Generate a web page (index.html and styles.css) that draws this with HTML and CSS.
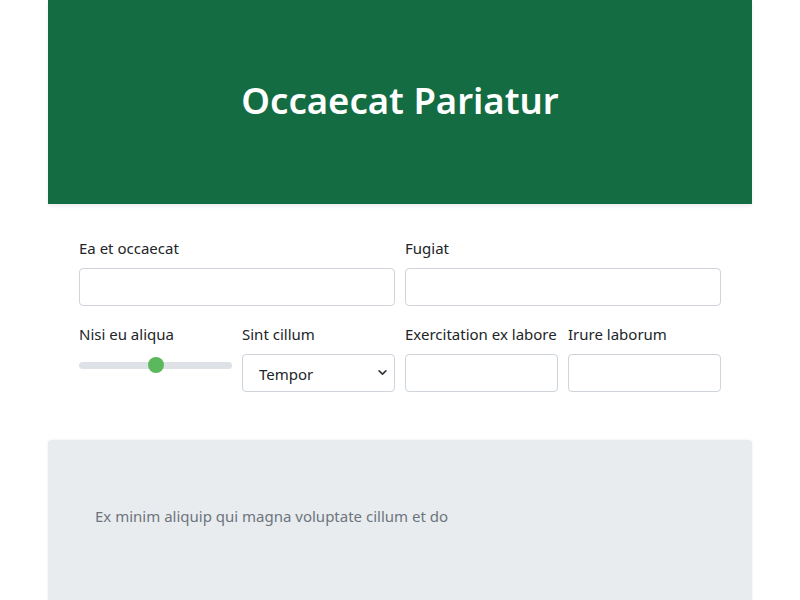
FILE: index.html
```html
<!DOCTYPE html>
<html lang="en">
<head>
<meta charset="utf-8">
<title>Occaecat Pariatur</title>
<link rel="stylesheet" href="styles.css">
</head>
<body>
<div class="container">
  <header class="hero">
    <h1 class="hero-title">Occaecat Pariatur</h1>
  </header>
  <form class="form">
    <div class="row row-2">
      <div class="field">
        <label class="label" for="f1">Ea et occaecat</label>
        <input class="control" id="f1" type="text">
      </div>
      <div class="field">
        <label class="label" for="f2">Fugiat</label>
        <input class="control" id="f2" type="text">
      </div>
    </div>
    <div class="row row-4">
      <div class="field">
        <label class="label" for="f3">Nisi eu aliqua</label>
        <input class="range" id="f3" type="range" min="0" max="100" value="50">
      </div>
      <div class="field">
        <label class="label" for="f4">Sint cillum</label>
        <div class="select-wrap">
          <select class="control select" id="f4">
            <option>Tempor</option>
          </select>
          <svg class="chevron" width="9" height="9" viewBox="0 0 16 16" aria-hidden="true"><path d="M2 5l6 6 6-6" fill="none" stroke="#343a40" stroke-width="3" stroke-linecap="round" stroke-linejoin="round"/></svg>
        </div>
      </div>
      <div class="field">
        <label class="label" for="f5">Exercitation ex labore</label>
        <input class="control" id="f5" type="text">
      </div>
      <div class="field">
        <label class="label" for="f6">Irure laborum</label>
        <input class="control" id="f6" type="text">
      </div>
    </div>
  </form>
  <section class="panel">
    <p class="panel-text">Ex minim aliquip qui magna voluptate cillum et do</p>
  </section>
</div>
</body>
</html>
```
FILE: styles.css
```css
* { box-sizing: border-box; }
html, body { margin: 0; padding: 0; background: #fff; }
body {
  font-family: "Noto Sans", "Open Sans", sans-serif;
  font-size: 15px;
  line-height: 24px;
  color: #212529;
}
.container {
  width: 704px;
  margin: 0 auto;
}
.hero {
  background: #146c43;
  height: 204px;
  display: flex;
  justify-content: center;
  padding-top: 74px;
  box-shadow: 0 2px 4px rgba(0,0,0,0.08);
}
.hero-title {
  margin: 0;
  color: #fff;
  font-size: 36.5px;
  font-weight: 600;
  line-height: 52px;
  height: 52px;
}
.form {
  padding: 32px 31px 48px;
  display: flex;
  flex-direction: column;
  gap: 16px;
}
.row {
  display: grid;
  gap: 10px;
}
.row-2 { grid-template-columns: 1fr 1fr; }
.row-4 { grid-template-columns: repeat(4, 1fr); }
.field {
  display: flex;
  flex-direction: column;
  min-width: 0;
}
.label {
  display: block;
  margin-bottom: 8px;
  white-space: nowrap;
}
.control {
  display: block;
  width: 100%;
  height: 38px;
  border: 1px solid #ced4da;
  border-radius: 4px;
  background: #fff;
  font: inherit;
  color: #212529;
  padding: 6px 12px;
}
.select-wrap {
  position: relative;
}
.select {
  -webkit-appearance: none;
  appearance: none;
  padding: 7px 30px 7px 16px;
}
.chevron {
  position: absolute;
  right: 8px;
  top: 14px;
  pointer-events: none;
}
.range {
  -webkit-appearance: none;
  appearance: none;
  width: 100%;
  height: 16px;
  margin: 3px 0 0;
  background: transparent;
}
.range::-webkit-slider-runnable-track {
  height: 7px;
  border-radius: 4px;
  background: #dee2e6;
}
.range::-webkit-slider-thumb {
  -webkit-appearance: none;
  width: 16px;
  height: 16px;
  border-radius: 50%;
  background: #5cb85c;
  border: 0;
  margin-top: -4.5px;
}
.panel {
  background: #e9ecef;
  border-radius: 4px;
  min-height: 220px;
  padding: 64px 47px 48px;
  box-shadow: 0 0 3px rgba(0,0,0,0.08);
}
.panel-text {
  margin: 0;
  color: #6c757d;
}
```
